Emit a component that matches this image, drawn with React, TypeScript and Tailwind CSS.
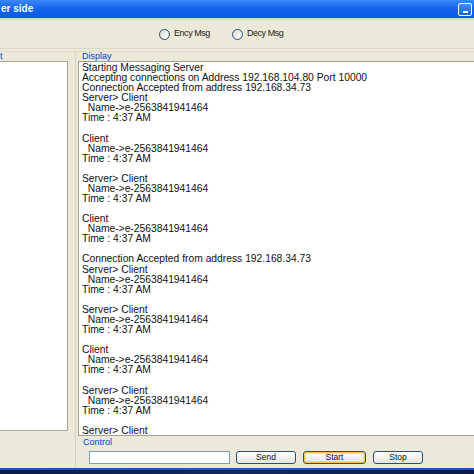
import React from 'react'

const LOG = [
  'Starting Messaging Server',
  'Accepting connections on Address 192.168.104.80 Port 10000',
  'Connection Accepted from address 192.168.34.73',
  'Server> Client',
  '  Name->e-2563841941464',
  'Time : 4:37 AM',
  '',
  'Client',
  '  Name->e-2563841941464',
  'Time : 4:37 AM',
  '',
  'Server> Client',
  '  Name->e-2563841941464',
  'Time : 4:37 AM',
  '',
  'Client',
  '  Name->e-2563841941464',
  'Time : 4:37 AM',
  '',
  'Connection Accepted from address 192.168.34.73',
  'Server> Client',
  '  Name->e-2563841941464',
  'Time : 4:37 AM',
  '',
  'Server> Client',
  '  Name->e-2563841941464',
  'Time : 4:37 AM',
  '',
  'Client',
  '  Name->e-2563841941464',
  'Time : 4:37 AM',
  '',
  'Server> Client',
  '  Name->e-2563841941464',
  'Time : 4:37 AM',
  '',
  'Server> Client',
]

function Radio({ label }: { label: string }) {
  return (
    <div className="flex items-center gap-[4px]">
      <span className="w-[11px] h-[11px] rounded-full border border-[#1c5180] bg-gradient-to-br from-[#dcdcd5] to-white" />
      <span className="text-[9px] tracking-[-0.45px] text-[#222]">{label}</span>
    </div>
  )
}

function XpButton({ label, active, w }: { label: string; active?: boolean; w: string }) {
  return (
    <div
      className={`${w} h-[13px] rounded-[3px] border border-[#2a4f7c] bg-gradient-to-b from-white to-[#e6e5de] flex items-center justify-center text-[8.5px] leading-none text-[#111] ${
        active ? 'shadow-[inset_0_0_0_1.5px_#f5c25a]' : ''
      }`}
    >
      {label}
    </div>
  )
}

export default function App() {
  return (
    <div
      className="w-[474px] h-[474px] overflow-hidden bg-[#ece9d8] flex flex-col"
      style={{ fontFamily: '"Liberation Sans", Arial, sans-serif' }}
    >
      {/* Title bar */}
      <div className="h-[18px] shrink-0 bg-gradient-to-b from-[#3a88f8] via-[#1463ec] to-[#0b5ae6] flex items-center justify-between">
        <span className="text-white font-bold text-[10px] leading-none pl-[1px]">er side</span>
        <div className="flex items-center gap-[2px] -mr-[4px]">
          <div className="w-[14px] h-[13px] rounded-[2px] border border-white bg-gradient-to-b from-[#4a8cf7] to-[#1f5fe0] flex items-end justify-center pb-[2px]">
            <span className="w-[5px] h-[2px] bg-white" />
          </div>
          <div className="w-[4px] h-[13px] rounded-l-[2px] border border-r-0 border-white bg-[#3a7af0]" />
        </div>
      </div>
      <div className="h-[2px] shrink-0 bg-[#c9d6ee]" />

      {/* Toolbar */}
      <div className="h-[28px] shrink-0 flex items-center pl-[159px] gap-[22px]">
        <Radio label="Ency Msg" />
        <Radio label="Decy Msg" />
      </div>
      <div className="h-[1px] shrink-0 bg-[#dcd8c4]" />
      <div className="h-[2px] shrink-0" />
      <div className="h-[1px] shrink-0 bg-[#e0dcc8]" />

      {/* Main */}
      <div className="flex flex-1 min-h-0">
        {/* Left group */}
        <div className="w-[76px] shrink-0 flex flex-col border-r border-[#d6d2c0]">
          <div className="h-[10px] text-[9px] leading-[10px] text-[#0046d5] -mt-[1px]">t</div>
          <div className="w-[68px] h-[370px] bg-white border border-[#a9a69a] border-l-0" />
        </div>

        {/* Right side */}
        <div className="flex-1 flex flex-col pl-[2px]">
          <div className="h-[10px] text-[9px] leading-[10px] text-[#0046d5] pl-[4px] -mt-[1px]">Display</div>
          <div className="h-[375px] bg-white border border-[#a3a095] border-r-0 pl-[3px] pt-[1px] overflow-hidden">
            {LOG.map((line, i) => (
              <div key={i} className="text-[10.3px] leading-[10.08px] h-[10.08px] whitespace-pre text-[#111]">
                {line}
              </div>
            ))}
          </div>
          <div className="h-[10px] text-[9px] leading-[10px] text-[#0046d5] pl-[5px] mt-[1px]">Control</div>
          <div className="flex items-center mt-[4px] pl-[11px]">
            <div className="w-[141px] h-[13px] bg-white border border-[#7f9db9]" />
            <div className="ml-[6px]">
              <XpButton label="Send" w="w-[60px]" />
            </div>
            <div className="ml-[7px]">
              <XpButton label="Start" w="w-[63px]" active />
            </div>
            <div className="ml-[7px]">
              <XpButton label="Stop" w="w-[50px]" />
            </div>
          </div>
        </div>
      </div>

      {/* Bottom border */}
      <div className="h-[2px] shrink-0 bg-[#1c4fd6]" />
      <div className="h-[4px] shrink-0 bg-gradient-to-r from-[#0c1a45] via-[#14275e] to-[#0c1a45]" />
    </div>
  )
}
